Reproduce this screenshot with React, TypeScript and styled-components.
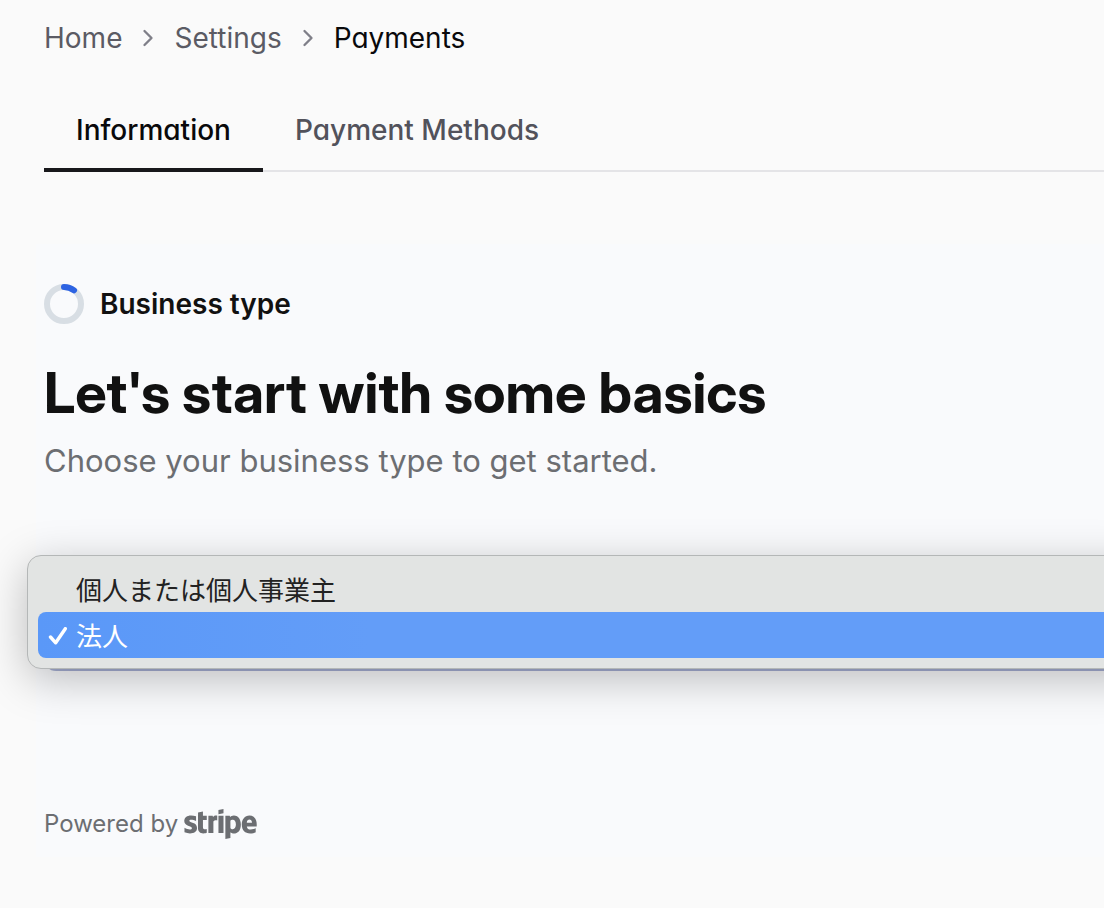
import React, { useState } from "react";
import styled, { createGlobalStyle, css } from "styled-components";
import { FaStripe } from "react-icons/fa";
import { ChevronRight } from "lucide-react";

const GlobalStyle = createGlobalStyle`
  *, *::before, *::after { box-sizing: border-box; }
  html { background: #fafafa; }
  body {
    margin: 0;
    color: #111111;
    font-family: Inter, "Noto Sans CJK JP", sans-serif;
    font-size: 28px;
    line-height: 40px;
  }
`;

const Page = styled.main`
  min-height: 100vh;
  padding-left: 44px;
  overflow-x: clip;
`;

const Breadcrumb = styled.nav`
  padding-top: 18px;
  font-feature-settings: "cv11";

  ol {
    display: flex;
    align-items: center;
    gap: 12px;
    margin: 0;
    padding: 0;
    list-style: none;
  }

  li {
    display: flex;
    align-items: center;
    gap: 12px;
  }

  svg {
    color: #7f7f88;
  }
`;

const Crumb = styled.a<{ $current?: boolean }>`
  color: ${(p) => (p.$current ? "#09090b" : "#5b5b64")};
  text-decoration: none;
`;

const TabList = styled.div`
  display: flex;
  height: 82px;
  margin-top: 32px;
  border-bottom: 2px solid #e4e4e7;
`;

const Tab = styled.button<{ $active: boolean }>`
  height: 82px;
  padding: 2px 32px 0;
  border: 0;
  border-bottom: 4px solid ${(p) => (p.$active ? "#18181b" : "transparent")};
  background: none;
  color: ${(p) => (p.$active ? "#09090b" : "#52525b")};
  font: inherit;
  font-weight: 500;
  font-feature-settings: "cv11";
  cursor: pointer;
`;

const Panel = styled.section`
  margin: 72px 0 0 -8px;
  padding: 40px 0 4px 8px;
  background: #f9fafc;
`;

const Step = styled.div`
  display: flex;
  align-items: center;
  gap: 16px;
  font-weight: 600;
`;

const Title = styled.h1`
  margin: 35px 0 0;
  font-family: "Inter Display", Inter, sans-serif;
  font-size: 56px;
  line-height: 68px;
  font-weight: 700;
`;

const Lead = styled.p`
  margin: 11px 0 0;
  color: #6c6e72;
  font-size: 31px;
  line-height: 46px;
`;

const Field = styled.div`
  position: relative;
  margin: 115px -32px 0 0;
`;

const Select = styled.select`
  display: block;
  width: 100%;
  height: 72px;
  padding: 0 24px;
  border: 3px solid #a6afd3;
  border-radius: 12px;
  background: #ffffff;
  color: #111111;
  font: inherit;
  font-size: 26px;
`;

const Menu = styled.div`
  position: absolute;
  left: -17px;
  right: -16px;
  bottom: 2px;
  display: flex;
  flex-direction: column;
  padding: 10px;
  border: 1px solid #b4b7b7;
  border-radius: 14px;
  background: #e2e4e3;
  box-shadow: 0 10px 44px rgba(0, 0, 0, 0.25);
`;

const Option = styled.button<{ $selected: boolean }>`
  display: flex;
  align-items: center;
  height: 46px;
  padding: 3px 0 0 10px;
  border: 0;
  border-radius: 8px;
  background: none;
  color: #222222;
  font: inherit;
  font-size: 26px;
  text-align: left;
  ${(p) =>
    p.$selected &&
    css`
      background: linear-gradient(90deg, #5a98f8, #639df8 30%);
      color: #ffffff;
    `}
`;

const Mark = styled.span`
  display: flex;
  width: 28px;
`;

const Footer = styled.footer`
  display: flex;
  align-items: center;
  gap: 6px;
  margin-top: 124px;
  color: #6c6e72;
  font-size: 24px;
`;

const StripeLink = styled.a`
  display: flex;
  color: #6c6e72;

  svg {
    width: 73px;
    height: 58px;
  }
`;

const tabs = ["Information", "Payment Methods"];
const businessTypes = ["個人または個人事業主", "法人"];

function ProgressRing() {
  return (
    <svg width="40" height="40" viewBox="0 0 40 40" fill="none" aria-hidden="true">
      <circle cx="20" cy="20" r="17" stroke="#d8dee4" strokeWidth="6" />
      <path d="M20 3A17 17 0 0 1 30 6.3" stroke="#2d63e2" strokeWidth="6" strokeLinecap="round" />
    </svg>
  );
}

function CheckMark() {
  return (
    <svg width="20" height="20" viewBox="0 0 20 20" fill="none" aria-hidden="true">
      <path d="M2.5 10L7.7 15.8L17.3 1.7" stroke="currentColor" strokeWidth="3.4" strokeLinecap="round" strokeLinejoin="round" />
    </svg>
  );
}

export default function App() {
  const [tab, setTab] = useState(tabs[0]);
  const [type, setType] = useState(businessTypes[1]);

  return (
    <>
      <GlobalStyle />
      <Page>
        <Breadcrumb aria-label="Breadcrumb">
          <ol>
            <li>
              <Crumb href="#home">Home</Crumb>
              <ChevronRight size={28} aria-hidden="true" />
            </li>
            <li>
              <Crumb href="#settings">Settings</Crumb>
              <ChevronRight size={28} aria-hidden="true" />
            </li>
            <li>
              <Crumb href="#payments" $current aria-current="page">Payments</Crumb>
            </li>
          </ol>
        </Breadcrumb>
        <TabList role="tablist">
          {tabs.map((name) => (
            <Tab key={name} type="button" role="tab" aria-selected={tab === name} $active={tab === name} onClick={() => setTab(name)}>
              {name}
            </Tab>
          ))}
        </TabList>
        <Panel>
          <Step><ProgressRing />Business type</Step>
          <Title>Let's start with some basics</Title>
          <Lead>Choose your business type to get started.</Lead>
          <Field>
            <Select aria-label="Business type" value={type} onChange={(e) => setType(e.target.value)}>
              {businessTypes.map((name) => <option key={name}>{name}</option>)}
            </Select>
            <Menu role="listbox" aria-label="Business type">
              {businessTypes.map((name) => (
                <Option key={name} type="button" role="option" aria-selected={type === name} $selected={type === name} onClick={() => setType(name)}>
                  <Mark>{type === name && <CheckMark />}</Mark>
                  {name}
                </Option>
              ))}
            </Menu>
          </Field>
          <Footer>
            Powered by
            <StripeLink href="#stripe" aria-label="Stripe">
              <FaStripe />
            </StripeLink>
          </Footer>
        </Panel>
      </Page>
    </>
  );
}
